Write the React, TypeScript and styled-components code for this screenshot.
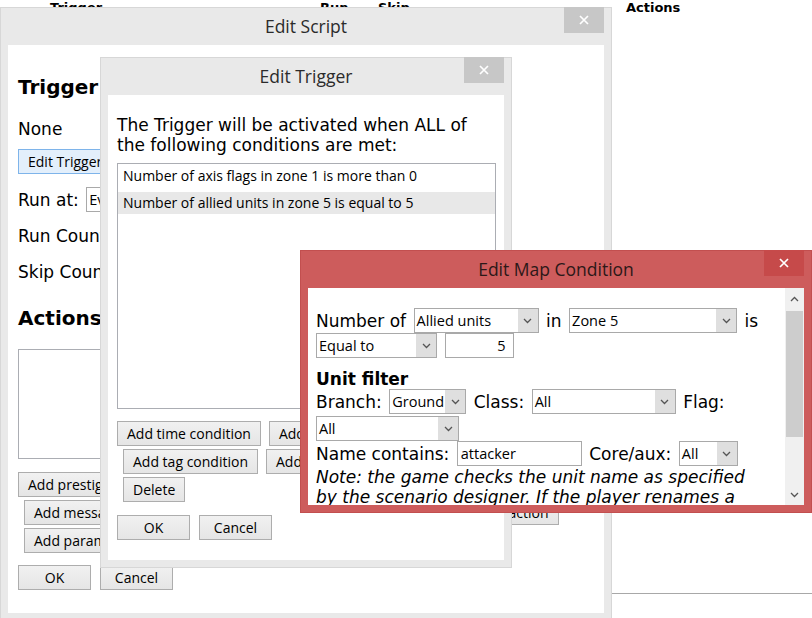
import React from "react";
import styled, { createGlobalStyle } from "styled-components";

const GlobalStyle = createGlobalStyle`
  html, body {
    margin: 0;
    padding: 0;
    background: #ffffff;
    overflow: hidden;
  }
  body {
    font-family: "DejaVu Sans", Verdana, sans-serif;
    color: #000;
  }
  *, *::before, *::after { box-sizing: border-box; }
`;

const Desktop = styled.div`
  position: relative;
  width: 812px;
  height: 618px;
  overflow: hidden;
  background: #fff;
`;

/* The script table page that the dialogs were opened from */
const PageHeader = styled.div`
  display: grid;
  grid-template-columns: 50px 270px 58px 248px 1fr;
  height: 16px;
  font: bold 13px/16px "DejaVu Sans", Verdana, sans-serif;
`;

const PageBody = styled.div`
  display: grid;
  grid-template-columns: 612px 1fr;
  height: 578px;
`;

const PageCell = styled.div<{ $ruled?: boolean }>`
  border-bottom: ${(p) => (p.$ruled ? "1px solid #a8a8a8" : "none")};
`;

/* Window chrome */
type FrameProps = { $x: number; $y: number; $w: number; $h: number; $active?: boolean };

const Window = styled.div<FrameProps>`
  position: absolute;
  left: ${(p) => p.$x}px;
  top: ${(p) => p.$y}px;
  width: ${(p) => p.$w}px;
  height: ${(p) => p.$h}px;
  display: flex;
  flex-direction: column;
  padding: 0 7px 7px;
  background: ${(p) => (p.$active ? "#cd5c5c" : "#e9e9e9")};
  border: 1px solid ${(p) => (p.$active ? "#c24f4f" : "#d7d7d7")};
`;

const TitleBar = styled.div`
  position: relative;
  flex: none;
  height: 37px;
  display: flex;
  align-items: center;
  justify-content: center;
`;

const Title = styled.span<{ $active?: boolean }>`
  font: 17.5px/1 "Open Sans", "Noto Sans", sans-serif;
  color: ${(p) => (p.$active ? "#2c1818" : "#2b2b2b")};
`;

const CloseButton = styled.div<{ $active?: boolean }>`
  position: absolute;
  top: -1px;
  right: 0;
  width: 40px;
  height: 26px;
  display: flex;
  align-items: center;
  justify-content: center;
  background: ${(p) => (p.$active ? "#c64a4a" : "#c7c7c7")};
`;

const Client = styled.div`
  flex: 1;
  min-height: 0;
  display: flex;
  background: #fff;
  overflow: hidden;
`;

/* Shared form parts */
const Heading = styled.h3<{ $mt?: number }>`
  margin: ${(p) => p.$mt ?? 0}px 0 0;
  height: 24px;
  font: bold 20px/24px "DejaVu Sans", Verdana, sans-serif;
  white-space: nowrap;
`;

const TextLine = styled.div<{ $mt?: number }>`
  margin-top: ${(p) => p.$mt ?? 0}px;
  font: 17px/20px "DejaVu Sans", Verdana, sans-serif;
  white-space: nowrap;
`;

const FieldRow = styled.div<{ $mt?: number }>`
  margin-top: ${(p) => p.$mt ?? 0}px;
  display: flex;
  align-items: center;
  gap: 7.5px;
  height: 25px;
  font: 17px/20px "DejaVu Sans", Verdana, sans-serif;
  white-space: nowrap;
`;

const Label = styled.span`
  flex: none;
`;

const Button = styled.button<{ $focused?: boolean; $wide?: boolean }>`
  flex: none;
  height: 25px;
  min-width: ${(p) => (p.$wide ? 73 : 0)}px;
  padding: 0 9px;
  font: 14px/1 "Open Sans", "Noto Sans", sans-serif;
  color: #000;
  white-space: nowrap;
  border: 1px solid ${(p) => (p.$focused ? "#7eb4ea" : "#adadad")};
  border-radius: 0;
  background: ${(p) => (p.$focused ? "#e3effb" : "linear-gradient(#f1f1f1, #e5e5e5)")};
`;

const ButtonRow = styled.div<{ $indent?: boolean; $mt?: number }>`
  display: flex;
  gap: 8px;
  margin-top: ${(p) => p.$mt ?? 3}px;
  padding-left: ${(p) => (p.$indent ? 6 : 0)}px;
`;

const DialogButtons = styled.div<{ $mt: number }>`
  display: flex;
  gap: 9px;
  margin-top: ${(p) => p.$mt}px;
`;

const ListBox = styled.div<{ $h: number; $w?: number; $mt: number }>`
  width: ${(p) => (p.$w ? `${p.$w}px` : "auto")};
  height: ${(p) => p.$h}px;
  margin-top: ${(p) => p.$mt}px;
  padding: 1px 0;
  display: flex;
  flex-direction: column;
  gap: 5px;
  border: 1px solid #abadb3;
  background: #fff;
`;

const ListItem = styled.div<{ $selected?: boolean }>`
  height: 22px;
  padding-left: 5px;
  font: 14px/22px "Open Sans", "Noto Sans", sans-serif;
  white-space: nowrap;
  background: ${(p) => (p.$selected ? "#e8e8e8" : "transparent")};
`;

const SelectBox = styled.div<{ $w: number }>`
  flex: none;
  width: ${(p) => p.$w}px;
  height: 25px;
  display: flex;
  border: 1px solid #a9a9a9;
  background: #fff;
`;

const SelectValue = styled.span`
  flex: 1;
  padding-left: 2px;
  overflow: hidden;
  font: 14.5px/23px "Open Sans", "Noto Sans", sans-serif;
  white-space: nowrap;
`;

const SelectArrow = styled.span`
  flex: none;
  width: 20px;
  display: flex;
  align-items: center;
  justify-content: center;
  background: #dfdfdf;
`;

const TextBox = styled.div<{ $w: number; $right?: boolean }>`
  flex: none;
  width: ${(p) => p.$w}px;
  height: 25px;
  padding: 0 ${(p) => (p.$right ? 7 : 3)}px 0 3px;
  text-align: ${(p) => (p.$right ? "right" : "left")};
  font: 14.5px/23px "Open Sans", "Noto Sans", sans-serif;
  border: 1px solid #a9a9a9;
  background: #fff;
`;

/* Edit Script body */
const ScriptBody = styled.div`
  flex: 1;
  padding: 30px 10px 0;
`;

/* Edit Trigger body */
const TriggerBody = styled.div`
  flex: 1;
  padding: 20px 8px 0 9px;
`;

const Intro = styled.p`
  margin: 0;
  font: 17px/20px "DejaVu Sans", Verdana, sans-serif;
`;

/* Edit Map Condition body */
const ConditionBody = styled.div`
  flex: 1;
  min-width: 0;
  padding: 20px 20px 0 8px;
`;

const SubHeading = styled.div<{ $mt: number }>`
  margin-top: ${(p) => p.$mt}px;
  font: bold 17px/20px "DejaVu Sans", Verdana, sans-serif;
`;

const Note = styled.p`
  margin: 1px 0 0;
  font: italic 17px/20px "DejaVu Sans", Verdana, sans-serif;
`;

const ScrollBar = styled.div`
  flex: none;
  width: 19px;
  display: flex;
  flex-direction: column;
  background: #f0f0f0;
`;

const ScrollButton = styled.div`
  flex: none;
  height: 21px;
  display: flex;
  align-items: center;
  justify-content: center;
`;

const ScrollTrack = styled.div`
  flex: 1;
  padding: 2px 1px 0;
`;

const ScrollThumb = styled.div<{ $h: number }>`
  height: ${(p) => p.$h}px;
  background: #cdcdcd;
`;

/* Small drawings */
const Chevron = ({ up }: { up?: boolean }) => (
  <svg width="9" height="6" viewBox="0 0 9 6">
    <path
      d={up ? "M1 5 L4.5 1.5 L8 5" : "M1 1 L4.5 4.5 L8 1"}
      fill="none"
      stroke="#555"
      strokeWidth="1.3"
    />
  </svg>
);

const CloseGlyph = () => (
  <svg width="10" height="10" viewBox="0 0 10 10">
    <path d="M1 1 L9 9 M9 1 L1 9" stroke="#fff" strokeWidth="1.7" />
  </svg>
);

const Select = ({ value, width }: { value: string; width: number }) => (
  <SelectBox $w={width}>
    <SelectValue>{value}</SelectValue>
    <SelectArrow>
      <Chevron />
    </SelectArrow>
  </SelectBox>
);

const WindowFrame = ({
  title,
  x,
  y,
  w,
  h,
  active,
  children,
}: {
  title: string;
  x: number;
  y: number;
  w: number;
  h: number;
  active?: boolean;
  children: React.ReactNode;
}) => (
  <Window $x={x} $y={y} $w={w} $h={h} $active={active}>
    <TitleBar>
      <Title $active={active}>{title}</Title>
      <CloseButton $active={active}>
        <CloseGlyph />
      </CloseButton>
    </TitleBar>
    <Client>{children}</Client>
  </Window>
);

export default function App() {
  return (
    <Desktop>
      <GlobalStyle />

      <PageHeader>
        <span />
        <span>Trigger</span>
        <span>Run</span>
        <span>Skip</span>
        <span>Actions</span>
      </PageHeader>
      <PageBody>
        <PageCell />
        <PageCell $ruled />
      </PageBody>

      <WindowFrame title="Edit Script" x={0} y={7} w={612} h={614}>
        <ScriptBody>
          <Heading>Trigger</Heading>
          <TextLine $mt={20}>None</TextLine>
          <ButtonRow $mt={10}>
            <Button $focused>Edit Trigger</Button>
          </ButtonRow>
          <FieldRow $mt={13}>
            <Label>Run at:</Label>
            <Select value="Every turn" width={140} />
          </FieldRow>
          <FieldRow $mt={11}>
            <Label>Run Count:</Label>
            <TextBox $w={60} $right>
              1
            </TextBox>
          </FieldRow>
          <FieldRow $mt={11}>
            <Label>Skip Count:</Label>
            <TextBox $w={60} $right>
              0
            </TextBox>
          </FieldRow>
          <Heading $mt={22}>Actions</Heading>
          <ListBox $h={110} $w={380} $mt={19} />
          <ButtonRow $mt={13}>
            <Button>Add prestige action</Button>
            <Button>Add victory action</Button>
          </ButtonRow>
          <ButtonRow $indent>
            <Button>Add message action</Button>
            <Button>Add reinforcement action</Button>
            <Button>Add unit objective action</Button>
          </ButtonRow>
          <ButtonRow $indent>
            <Button>Add parameter action</Button>
            <Button>Add flag action</Button>
          </ButtonRow>
          <DialogButtons $mt={12}>
            <Button $wide>OK</Button>
            <Button $wide>Cancel</Button>
          </DialogButtons>
        </ScriptBody>
      </WindowFrame>

      <WindowFrame title="Edit Trigger" x={100} y={57} w={412} h={511}>
        <TriggerBody>
          <Intro>The Trigger will be activated when ALL of the following conditions are met:</Intro>
          <ListBox $h={246} $mt={8}>
            <ListItem>Number of axis flags in zone 1 is more than 0</ListItem>
            <ListItem $selected>Number of allied units in zone 5 is equal to 5</ListItem>
          </ListBox>
          <ButtonRow $mt={12}>
            <Button>Add time condition</Button>
            <Button>Add map condition</Button>
          </ButtonRow>
          <ButtonRow $indent>
            <Button>Add tag condition</Button>
            <Button>Add counter condition</Button>
          </ButtonRow>
          <ButtonRow $indent>
            <Button>Delete</Button>
          </ButtonRow>
          <DialogButtons $mt={13}>
            <Button $wide>OK</Button>
            <Button $wide>Cancel</Button>
          </DialogButtons>
        </TriggerBody>
      </WindowFrame>

      <WindowFrame title="Edit Map Condition" x={300} y={250} w={512} h={263} active>
        <ConditionBody>
          <FieldRow>
            <Label>Number of</Label>
            <Select value="Allied units" width={125} />
            <Label>in</Label>
            <Select value="Zone 5" width={168} />
            <Label>is</Label>
          </FieldRow>
          <FieldRow>
            <Select value="Equal to" width={121} />
            <TextBox $w={69} $right>
              5
            </TextBox>
          </FieldRow>
          <SubHeading $mt={11}>Unit filter</SubHeading>
          <FieldRow>
            <Label>Branch:</Label>
            <Select value="Ground" width={77} />
            <Label>Class:</Label>
            <Select value="All" width={144} />
            <Label>Flag:</Label>
          </FieldRow>
          <FieldRow $mt={2}>
            <Select value="All" width={143} />
          </FieldRow>
          <FieldRow>
            <Label>Name contains:</Label>
            <TextBox $w={125}>attacker</TextBox>
            <Label>Core/aux:</Label>
            <Select value="All" width={59} />
          </FieldRow>
          <Note>
            Note: the game checks the unit name as specified by the scenario designer. If the player
            renames a unit, the condition still uses the original name.
          </Note>
        </ConditionBody>
        <ScrollBar>
          <ScrollButton>
            <Chevron up />
          </ScrollButton>
          <ScrollTrack>
            <ScrollThumb $h={126} />
          </ScrollTrack>
          <ScrollButton>
            <Chevron />
          </ScrollButton>
        </ScrollBar>
      </WindowFrame>
    </Desktop>
  );
}
